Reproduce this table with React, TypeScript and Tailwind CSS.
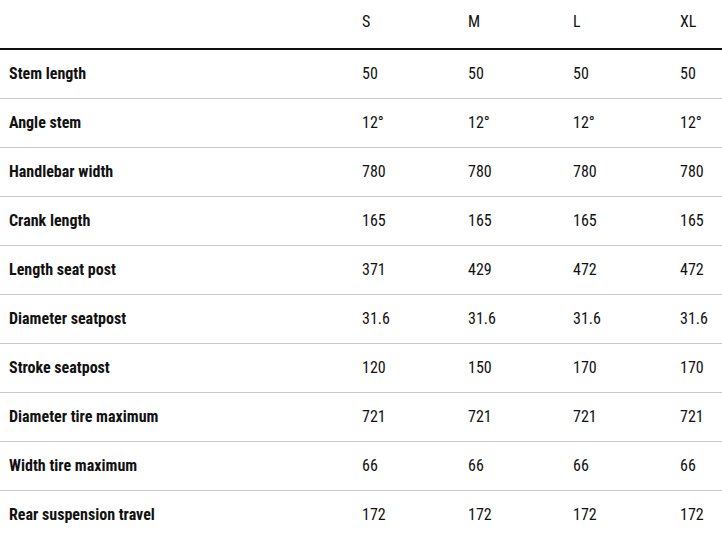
const sizes = ["S", "M", "L", "XL"]

const rows: [string, string[]][] = [
  ["Stem length", ["50", "50", "50", "50"]],
  ["Angle stem", ["12°", "12°", "12°", "12°"]],
  ["Handlebar width", ["780", "780", "780", "780"]],
  ["Crank length", ["165", "165", "165", "165"]],
  ["Length seat post", ["371", "429", "472", "472"]],
  ["Diameter seatpost", ["31.6", "31.6", "31.6", "31.6"]],
  ["Stroke seatpost", ["120", "150", "170", "170"]],
  ["Diameter tire maximum", ["721", "721", "721", "721"]],
  ["Width tire maximum", ["66", "66", "66", "66"]],
  ["Rear suspension travel", ["172", "172", "172", "172"]],
]

const grid = "grid grid-cols-[353px_106px_105px_107px_1fr] items-center"

export default function App() {
  return (
    <div className="w-[722px] h-[538px] overflow-hidden bg-white text-[#111] font-['Roboto',sans-serif] font-stretch-condensed text-[16px]">
      <div className={`${grid} h-[50px] border-b-2 border-[#111] pb-[4px]`}>
        <div />
        {sizes.map((s) => (
          <div key={s} className="pl-[9px]">
            {s}
          </div>
        ))}
      </div>
      {rows.map(([label, vals]) => (
        <div key={label} className={`${grid} h-[49px] border-b border-[#c8c8c8]`}>
          <div className="pl-[9px] font-bold">{label}</div>
          {vals.map((v, i) => (
            <div key={i} className="pl-[9px]">
              {v}
            </div>
          ))}
        </div>
      ))}
    </div>
  )
}
